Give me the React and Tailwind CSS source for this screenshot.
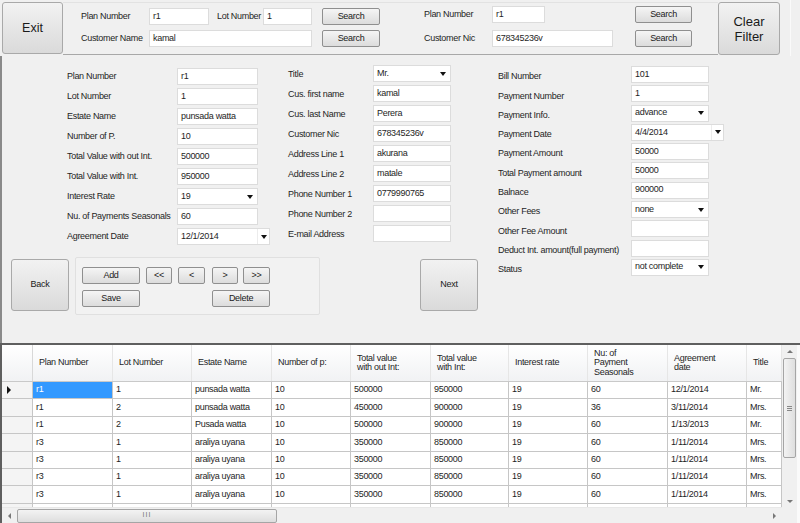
import React from 'react'

const btn = 'flex shrink-0 items-center justify-center rounded-[2px] border border-[#8f8f8f] bg-linear-to-b from-[#f5f5f5] to-[#dcdcdc] text-[#1a1a1a]'
const bigBtn = 'flex shrink-0 items-center justify-center rounded-[3px] border border-[#a9a9a9] bg-linear-to-b from-[#f2f2f2] to-[#dadada] text-[#1a1a1a]'

function Arrow() {
  return <span className="block h-0 w-0 border-x-[3px] border-t-[4px] border-x-transparent border-t-[#111]" />
}

function Box({ value = '', w = 'w-[81px]', kind }) {
  if (kind === 'date') {
    return (
      <div className="flex h-[17px] w-[93px] shrink-0 border border-[#dcdcdc] bg-white">
        <div className="flex flex-1 items-center pl-[3px] leading-none">{value}</div>
        <div className="flex w-[12px] items-center justify-center border-l border-[#ececec]"><Arrow /></div>
      </div>
    )
  }
  return (
    <div className={`flex h-[17px] ${w} shrink-0 items-center border border-[#dcdcdc] bg-white pl-[3px] pr-[4px] leading-none`}>
      <span className="flex-1 pb-[1px]">{value}</span>
      {kind === 'combo' && <Arrow />}
    </div>
  )
}

function Field({ label, lw, children, labelClass = '' }) {
  return (
    <div className="flex h-[17px] items-center">
      <div className={`${lw} ${labelClass} shrink-0 whitespace-nowrap`}>{label}</div>
      {children}
    </div>
  )
}

const col1 = [
  ['Plan Number', 'r1'],
  ['Lot Number', '1'],
  ['Estate Name', 'punsada watta'],
  ['Number of P.', '10'],
  ['Total Value with out Int.', '500000'],
  ['Total Value with Int.', '950000'],
  ['Interest Rate', '19', 'combo'],
  ['Nu. of Payments Seasonals', '60'],
  ['Agreement Date', '12/1/2014', 'date'],
]

const col2 = [
  ['Title', 'Mr.', 'combo'],
  ['Cus. first name', 'kamal'],
  ['Cus. last Name', 'Perera'],
  ['Customer Nic', '678345236v'],
  ['Address Line 1', 'akurana'],
  ['Address Line 2', 'matale'],
  ['Phone Number 1', '0779990765'],
  ['Phone Number 2', ''],
  ['E-mail Address', ''],
]

const col3 = [
  ['Bill Number', '101'],
  ['Payment Number', '1'],
  ['Payment Info.', 'advance', 'combo'],
  ['Payment Date', '4/4/2014', 'date'],
  ['Payment Amount', '50000'],
  ['Total Payment amount', '50000'],
  ['Balnace', '900000'],
  ['Other Fees', 'none', 'combo'],
  ['Other Fee Amount', ''],
  ['Deduct Int. amount(full payment)', ''],
  ['Status', 'not complete', 'combo'],
]

const cols = [
  { w: 'w-[80px]', h: ['Plan Number'] },
  { w: 'w-[79px]', h: ['Lot Number'] },
  { w: 'w-[80px]', h: ['Estate Name'] },
  { w: 'w-[79px]', h: ['Number of p:'] },
  { w: 'w-[80px]', h: ['Total value', 'with out Int:'] },
  { w: 'w-[78px]', h: ['Total value', 'with Int:'] },
  { w: 'w-[79px]', h: ['Interest rate'] },
  { w: 'w-[80px]', h: ['Nu: of', 'Payment', 'Seasonals'] },
  { w: 'w-[79px]', h: ['Agreement', 'date'] },
  { w: 'w-[35px]', h: ['Title'] },
]

const rows = [
  ['r1', '1', 'punsada watta', '10', '500000', '950000', '19', '60', '12/1/2014', 'Mr.'],
  ['r1', '2', 'punsada watta', '10', '450000', '900000', '19', '36', '3/11/2014', 'Mrs.'],
  ['r1', '2', 'Pusada watta', '10', '500000', '900000', '19', '60', '1/13/2013', 'Mr.'],
  ['r3', '1', 'araliya uyana', '10', '350000', '850000', '19', '60', '1/11/2014', 'Mrs.'],
  ['r3', '1', 'araliya uyana', '10', '350000', '850000', '19', '60', '1/11/2014', 'Mrs.'],
  ['r3', '1', 'araliya uyana', '10', '350000', '850000', '19', '60', '1/11/2014', 'Mrs.'],
  ['r3', '1', 'araliya uyana', '10', '350000', '850000', '19', '60', '1/11/2014', 'Mrs.'],
  ['r3', '1', 'araliya uyana', '10', '350000', '850000', '19', '60', '1/11/2014', 'Mr.'],
]

export default function App() {
  return (
    <div className="flex h-[523px] w-[800px] flex-col overflow-hidden bg-[#f0f0f0] font-['Liberation_Sans',Arial,sans-serif] text-[9px] tracking-[-0.3px] text-[#1e1e1e]">
      {/* Top search bar */}
      <div className="flex h-[56px] shrink-0 items-start">
        <div className={`${bigBtn} ml-[2px] mt-[2px] h-[52px] w-[61px] text-[12.5px] tracking-normal`}>Exit</div>
        <div className="mt-[2px] flex h-[53px] w-[655px] shrink-0 border-y border-t-[#e2e2e2] border-b-[#a8a8a8]">
          <div className="ml-[18px] flex flex-col">
            <div className="mt-[5px] flex h-[17px] items-center">
              <div className="w-[68px] shrink-0">Plan Number</div>
              <Box value="r1" w="w-[60px]" />
              <div className="ml-[8px] w-[46px] shrink-0">Lot Number</div>
              <Box value="1" w="w-[49px]" />
              <div className={`${btn} ml-[10px] h-[17px] w-[58px]`}>Search</div>
            </div>
            <div className="mt-[5px] flex h-[17px] items-center">
              <div className="w-[68px] shrink-0">Customer Name</div>
              <Box value="kamal" w="w-[163px]" />
              <div className={`${btn} ml-[10px] h-[17px] w-[58px]`}>Search</div>
            </div>
          </div>
          <div className="ml-[44px] flex flex-col">
            <div className="mt-[3px] flex h-[17px] items-center">
              <div className="w-[68px] shrink-0">Plan Number</div>
              <Box value="r1" w="w-[53px]" />
              <div className={`${btn} ml-[90px] h-[17px] w-[57px]`}>Search</div>
            </div>
            <div className="mt-[7px] flex h-[17px] items-center">
              <div className="w-[68px] shrink-0">Customer Nic</div>
              <Box value="678345236v" w="w-[121px]" />
              <div className={`${btn} ml-[22px] h-[17px] w-[57px]`}>Search</div>
            </div>
          </div>
        </div>
        <div className={`${bigBtn} mt-[2px] h-[53px] w-[62px] flex-col text-[13px] leading-[15px] tracking-normal`}>
          <span>Clear</span>
          <span>Filter</span>
        </div>
        <div className="ml-[10px] h-[56px] border-r border-[#fafafa]" />
      </div>

      {/* Detail form */}
      <div className="flex h-[287px] shrink-0 border-l-2 border-[#8a8a8a]">
        <div className="flex w-[468px] shrink-0 flex-col">
          <div className="flex h-[188px] items-start">
            <div className="ml-[65px] mt-[12px] flex w-[203px] shrink-0 flex-col gap-[3px]">
              {col1.map(([l, v, k]) => (
                <Field key={l} label={l} lw="w-[110px]"><Box value={v} kind={k} /></Field>
              ))}
            </div>
            <div className="ml-[18px] mt-[9px] flex shrink-0 flex-col gap-[3px]">
              {col2.map(([l, v, k]) => (
                <Field key={l} label={l} lw="w-[85px]" labelClass="pt-[3px]"><Box value={v} kind={k} w="w-[78px]" /></Field>
              ))}
            </div>
          </div>
          <div className="mt-[13px] flex items-start">
            <div className={`${bigBtn} ml-[9px] mt-[2px] h-[52px] w-[58px]`}>Back</div>
            <div className="ml-[6px] h-[58px] w-[245px] shrink-0 rounded-[2px] border border-[#e0e0e0] bg-[#f2f2f2] pl-[6px] pt-[9px]">
              <div className="flex h-[17px] items-center">
                <div className={`${btn} h-[17px] w-[58px]`}>Add</div>
                <div className={`${btn} ml-[6px] h-[17px] w-[26px]`}>&lt;&lt;</div>
                <div className={`${btn} ml-[6px] h-[17px] w-[27px]`}>&lt;</div>
                <div className={`${btn} ml-[7px] h-[17px] w-[26px]`}>&gt;</div>
                <div className={`${btn} ml-[5px] h-[17px] w-[27px]`}>&gt;&gt;</div>
              </div>
              <div className="mt-[6px] flex h-[17px] items-center">
                <div className={`${btn} h-[17px] w-[58px]`}>Save</div>
                <div className={`${btn} ml-[72px] h-[17px] w-[58px]`}>Delete</div>
              </div>
            </div>
            <div className={`${bigBtn} ml-[100px] mt-[2px] h-[52px] w-[58px]`}>Next</div>
          </div>
        </div>
        <div className="ml-[28px] mt-[10px] flex flex-col gap-[2.3px]">
          {col3.map(([l, v, k]) => (
            <Field key={l} label={l} lw="w-[133px]" labelClass="pt-[5px]"><Box value={v} kind={k} w="w-[78px]" /></Field>
          ))}
        </div>
      </div>

      {/* Data grid */}
      <div className="flex h-[180px] shrink-0 border-l-2 border-t-2 border-[#5f5f5f] bg-white">
        <div className="flex w-[780px] flex-col">
          <div className="h-[162px] overflow-hidden">
            <div className="flex h-[37px] border-b border-[#c9c9c9] bg-linear-to-b from-white to-[#f1f2f4]">
              <div className="w-[31px] border-r border-[#d8d8d8]" />
              {cols.map((c, i) => (
                <div key={i} className={`${c.w} flex flex-col justify-center border-r border-[#e6e6e6] pl-[6px] leading-[9.5px]`}>
                  {c.h.map(t => <span key={t}>{t}</span>)}
                </div>
              ))}
            </div>
            {rows.map((r, ri) => (
              <div key={ri} className="flex h-[17.4px] border-b border-[#c6c6c6]">
                <div className="flex w-[31px] items-center border-r border-[#c6c6c6] bg-[#f4f4f4] pl-[5px]">
                  {ri === 0 && <span className="block h-0 w-0 border-y-[4px] border-l-[4px] border-y-transparent border-l-[#111]" />}
                </div>
                {r.map((v, ci) => (
                  <div key={ci} className={`${cols[ci].w} flex items-center border-r border-[#c6c6c6] pl-[3px] ${ri === 0 && ci === 0 ? 'bg-[#3399ff] text-white' : ''}`}>{v}</div>
                ))}
              </div>
            ))}
          </div>
          <div className="flex h-[16px] items-center border-t border-[#e8e8e8] bg-[#f0f0f0]">
            <div className="flex w-[15px] items-center justify-center">
              <span className="block h-0 w-0 border-y-[3px] border-r-[3px] border-y-transparent border-r-[#777]" />
            </div>
            <div className="flex h-[14px] w-[260px] items-center justify-center rounded-[2px] border border-[#a5a5a5] bg-linear-to-b from-[#f3f3f3] to-[#dedede] text-[7px] tracking-[1px] text-[#777]">III</div>
            <div className="flex-1" />
            <div className="flex w-[15px] items-center justify-center">
              <span className="block h-0 w-0 border-y-[3px] border-l-[3px] border-y-transparent border-l-[#777]" />
            </div>
          </div>
        </div>
        <div className="flex w-[15px] flex-col bg-[#f0f0f0]">
          <div className="flex h-[13px] items-center justify-center">
            <span className="block h-0 w-0 border-x-[3px] border-b-[3px] border-x-transparent border-b-[#777]" />
          </div>
          <div className="mx-auto flex h-[100px] w-[13px] items-center justify-center rounded-[2px] border border-[#a5a5a5] bg-linear-to-r from-[#f3f3f3] to-[#dedede]">
            <div className="flex flex-col gap-[1px]">
              <span className="block h-px w-[5px] bg-[#888]" />
              <span className="block h-px w-[5px] bg-[#888]" />
              <span className="block h-px w-[5px] bg-[#888]" />
            </div>
          </div>
          <div className="flex-1" />
          <div className="flex h-[12px] items-center justify-center">
            <span className="block h-0 w-0 border-x-[3px] border-t-[3px] border-x-transparent border-t-[#777]" />
          </div>
          <div className="h-[16px] bg-[#f0f0f0]" />
        </div>
        <div className="flex-1 bg-[#fafafa]" />
      </div>
    </div>
  )
}
